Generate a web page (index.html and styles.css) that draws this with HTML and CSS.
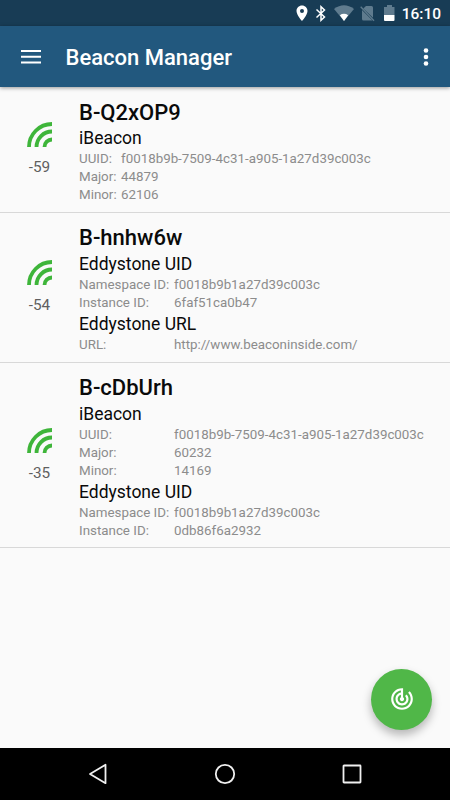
FILE: index.html
```html
<!DOCTYPE html>
<html lang="en">

<head>
    <meta charset="UTF-8">
    <meta name="viewport" content="width=device-width, initial-scale=1.0">
    <title>Beacon Manager</title>
    <link rel="stylesheet" href="styles.css">
</head>

<body>
    <div class="screen">
        <!-- Status bar -->
        <div class="status-bar">
            <svg class="status-pin" width="12" height="17" viewBox="0 0 12 17">
                <path fill="#fff" fill-rule="evenodd" d="M6 .5C2.900.5.5 2.900.5 6c0 4 5.500 10 5.500 10s5.500-6 5.500-10C11.500 2.900 9.100.5 6 .5zM6 4a2 2 0 1 1 0 4 2 2 0 0 1 0-4z"/>
            </svg>
            <svg class="status-bluetooth" width="12" height="17" viewBox="0 0 12 17">
                <path fill="none" stroke="#fff" stroke-width="1.500" d="M1.500 4.500l8 7.500L6 15.300V1.700L9.500 5l-8 7.500"/>
            </svg>
            <svg class="status-wifi" width="20" height="17" viewBox="0 0 20 17">
                <path fill="#5f7b8e" d="M0 4Q10-3.500 20 4L10 16z"/>
                <path fill="#fff" d="M5.800 10.200Q10 7.300 14.200 10.200L10 16z"/>
            </svg>
            <svg class="status-sim" width="15" height="17" viewBox="0 0 15 17">
                <path fill="#5f7b8e" d="M6 1h5.500q1.500 0 1.500 1.500v10.300L3.300 3.500zM2 5l10.500 10.500H3.500Q2 15.500 2 14z"/>
                <path fill="none" stroke="#5f7b8e" stroke-width="1.300" d="M.7 1.700l13.300 14"/>
            </svg>
            <svg class="status-battery" width="11" height="17" viewBox="0 0 11 17">
                <path fill="#5f7b8e" d="M3 0h5v2h2.500v8H0V2h3z"/>
                <path fill="#fff" d="M0 10h10.500v5q0 1-1 1H1q-1 0-1-1z"/>
            </svg>
            <span class="clock">16:10</span>
        </div>

        <!-- Toolbar -->
        <div class="toolbar">
            <svg width="20" height="14" viewBox="0 0 20 14">
                <path fill="#fff" d="M0 0h20v2H0zM0 5.700h20v2H0zM0 11.400h20v2H0z"/>
            </svg>
            <h1 class="toolbar-title">Beacon Manager</h1>
            <svg width="6" height="20" viewBox="0 0 6 20">
                <g fill="#fff">
                    <circle cx="3" cy="3.500" r="2.300"/>
                    <circle cx="3" cy="10" r="2.300"/>
                    <circle cx="3" cy="16.500" r="2.300"/>
                </g>
            </svg>
        </div>

        <!-- Beacon list -->
        <div class="beacon-list">
            <div class="beacon">
                <div class="signal">
                    <svg width="26" height="26" viewBox="0 0 26 26">
                        <path class="signal-arc" d="M2 25A23 23 0 0 1 25 2M9.500 25A15.500 15.500 0 0 1 25 9.500M17.500 25A7.500 7.500 0 0 1 25 17.500"/>
                    </svg>
                    <span class="rssi">-59</span>
                </div>
                <div class="info">
                    <h2>B-Q2xOP9</h2>
                    <h3>iBeacon</h3>
                    <dl class="narrow">
                        <dt>UUID:</dt><dd>f0018b9b-7509-4c31-a905-1a27d39c003c</dd>
                        <dt>Major:</dt><dd>44879</dd>
                        <dt>Minor:</dt><dd>62106</dd>
                    </dl>
                </div>
            </div>

            <div class="beacon">
                <div class="signal">
                    <svg width="26" height="26" viewBox="0 0 26 26">
                        <path class="signal-arc" d="M2 25A23 23 0 0 1 25 2M9.500 25A15.500 15.500 0 0 1 25 9.500M17.500 25A7.500 7.500 0 0 1 25 17.500"/>
                    </svg>
                    <span class="rssi">-54</span>
                </div>
                <div class="info">
                    <h2>B-hnhw6w</h2>
                    <h3>Eddystone UID</h3>
                    <dl>
                        <dt>Namespace ID:</dt><dd>f0018b9b1a27d39c003c</dd>
                        <dt>Instance ID:</dt><dd>6faf51ca0b47</dd>
                    </dl>
                    <h3>Eddystone URL</h3>
                    <dl>
                        <dt>URL:</dt><dd>http://www.beaconinside.com/</dd>
                    </dl>
                </div>
            </div>

            <div class="beacon">
                <div class="signal">
                    <svg width="26" height="26" viewBox="0 0 26 26">
                        <path class="signal-arc" d="M2 25A23 23 0 0 1 25 2M9.500 25A15.500 15.500 0 0 1 25 9.500M17.500 25A7.500 7.500 0 0 1 25 17.500"/>
                    </svg>
                    <span class="rssi">-35</span>
                </div>
                <div class="info">
                    <h2>B-cDbUrh</h2>
                    <h3>iBeacon</h3>
                    <dl>
                        <dt>UUID:</dt><dd>f0018b9b-7509-4c31-a905-1a27d39c003c</dd>
                        <dt>Major:</dt><dd>60232</dd>
                        <dt>Minor:</dt><dd>14169</dd>
                    </dl>
                    <h3>Eddystone UID</h3>
                    <dl>
                        <dt>Namespace ID:</dt><dd>f0018b9b1a27d39c003c</dd>
                        <dt>Instance ID:</dt><dd>0db86f6a2932</dd>
                    </dl>
                </div>
            </div>

            <!-- Scan button -->
            <button class="scan-button" aria-label="Scan">
                <svg width="26" height="26" viewBox="0 0 24 24">
                    <path fill="#fff" d="M19.070 4.930l-1.410 1.410C19.100 7.790 20 9.790 20 12c0 4.420-3.580 8-8 8s-8-3.580-8-8c0-4.080 3.050-7.440 7-7.930v2.020C8.160 6.570 6 9.030 6 12c0 3.310 2.690 6 6 6s6-2.690 6-6c0-1.660-.67-3.160-1.760-4.240l-1.410 1.410C15.550 9.900 16 10.900 16 12c0 2.210-1.790 4-4 4s-4-1.790-4-4c0-1.860 1.280-3.410 3-3.860v2.140c-.6.350-1 .98-1 1.720 0 1.100.9 2 2 2s2-.9 2-2c0-.74-.4-1.380-1-1.720V2h-1C6.480 2 2 6.480 2 12s4.480 10 10 10 10-4.480 10-10c0-2.760-1.120-5.260-2.930-7.070z"/>
                </svg>
            </button>
        </div>

        <!-- Navigation bar -->
        <div class="nav-bar">
            <svg width="22" height="22" viewBox="0 0 22 22">
                <path class="nav-shape" d="M18.500 1.800v18.400L3 11z"/>
            </svg>
            <svg width="22" height="22" viewBox="0 0 22 22">
                <circle class="nav-shape" cx="11" cy="11" r="9.200"/>
            </svg>
            <svg width="22" height="22" viewBox="0 0 22 22">
                <rect class="nav-shape" x="2.500" y="2.500" width="17" height="17" rx=".5"/>
            </svg>
        </div>
    </div>
</body>

</html>
```
FILE: styles.css
```css
* {
    box-sizing: border-box;
}

body {
    margin: 0;
    font-family: Roboto, sans-serif;
    background-color: #fafafa;
}

h1, h2, h3, dl, dd {
    margin: 0;
}

svg {
    display: block;
    flex-shrink: 0;
}

.screen {
    display: flex;
    flex-direction: column;
    width: 450px;
    height: 800px;
    overflow: hidden;
}

.status-bar {
    display: flex;
    align-items: center;
    justify-content: flex-end;
    height: 26px;
    padding: 1px 9px 0 0;
    background-color: #183c55;
}

.status-bluetooth {
    margin-left: 7px;
}

.status-wifi {
    margin-left: 7px;
}

.status-sim {
    margin-left: 6px;
}

.status-battery {
    margin-left: 9px;
}

.clock {
    margin-left: 7px;
    color: #fff;
    font-size: 15.5px;
    font-weight: 500;
}

.toolbar {
    display: flex;
    align-items: center;
    height: 61px;
    padding: 0 21px;
    background-color: #22587e;
    box-shadow: 0 1px 4px rgba(0, 0, 0, 0.4);
    z-index: 1;
}

.toolbar-title {
    flex: 1;
    margin-left: 24.5px;
    padding-top: 2px;
    color: #fff;
    font-size: 22px;
    font-weight: 500;
    line-height: 26px;
}

.beacon-list {
    position: relative;
    flex: 1;
    background-color: #fafafa;
}

.beacon {
    display: flex;
    border-bottom: 1px solid #d8d8d8;
}

.signal {
    display: flex;
    flex-direction: column;
    align-items: center;
    justify-content: center;
    width: 79px;
    gap: 10px;
}

.signal-arc {
    fill: none;
    stroke: #3eb53a;
    stroke-width: 3.8;
}

.rssi {
    color: #5f5f5f;
    font-size: 15.3px;
    line-height: 18px;
}

.info {
    padding: 12.6px 0 7.4px;
}

.info h2 {
    color: #0a0a0a;
    font-size: 22px;
    font-weight: 500;
    line-height: 26.8px;
}

.info h3 {
    color: #0a0a0a;
    font-size: 17.5px;
    font-weight: 400;
    line-height: 24px;
}

.info dl {
    display: grid;
    grid-template-columns: 95px auto;
    color: #8c8c8c;
    font-size: 13.35px;
    line-height: 18px;
}

.info dl.narrow {
    grid-template-columns: 42px auto;
}

.scan-button {
    position: absolute;
    right: 18px;
    bottom: 18px;
    display: flex;
    align-items: center;
    justify-content: center;
    width: 61px;
    height: 61px;
    padding: 0 0 1px;
    border: none;
    border-radius: 50%;
    background-color: #50b748;
    box-shadow: 0 5px 10px rgba(0, 0, 0, 0.28);
    cursor: pointer;
}

.nav-bar {
    display: flex;
    align-items: center;
    justify-content: center;
    gap: 105px;
    height: 52px;
    background-color: #000;
}

.nav-shape {
    fill: none;
    stroke: #f0f0f0;
    stroke-width: 1.8;
    stroke-linejoin: round;
}
```
